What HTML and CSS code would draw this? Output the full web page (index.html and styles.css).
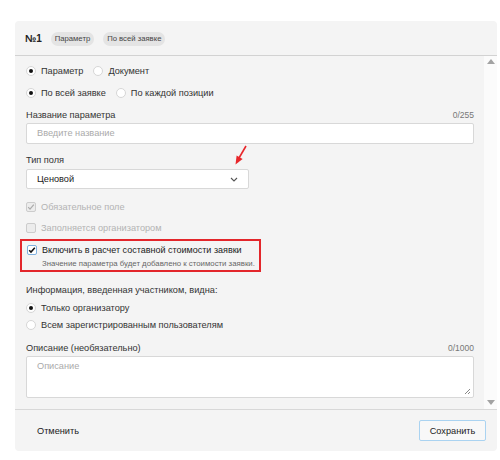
FILE: index.html
```html
<!DOCTYPE html>
<html lang="ru">
<head>
    <meta charset="UTF-8">
    <title>Параметр заявки</title>
    <link rel="stylesheet" href="styles.css">
</head>
<body>
    <div class="panel">
        <div class="head">
            <b class="num">№1</b>
            <span class="tag">Параметр</span>
            <span class="tag">По всей заявке</span>
        </div>

        <div class="body">
            <div class="content">
                <div class="row">
                    <label class="opt"><span class="radio on"></span>Параметр</label>
                    <label class="opt"><span class="radio"></span>Документ</label>
                </div>
                <div class="row r2">
                    <label class="opt"><span class="radio on"></span>По всей заявке</label>
                    <label class="opt"><span class="radio"></span>По каждой позиции</label>
                </div>

                <div class="label l1"><span>Название параметра</span><span class="count">0/255</span></div>
                <div class="input placeholder">Введите название</div>

                <div class="label l2"><span>Тип поля</span></div>
                <div class="select">
                    <span>Ценовой</span>
                    <svg width="8" height="5" viewBox="0 0 8 5"><path d="M1 1l3 3 3-3" fill="none" stroke="#555" stroke-width="1.1"/></svg>
                </div>

                <div class="check disabled c1">
                    <span class="box"><svg width="8" height="8" viewBox="0 0 8 8"><path d="M1.2 4.2l1.8 1.9 3.8-4.4" fill="none" stroke="#aaa" stroke-width="1.2"/></svg></span>
                    Обязательное поле
                </div>
                <div class="check disabled c2">
                    <span class="box"></span>
                    Заполняется организатором
                </div>

                <div class="marked">
                    <div class="check">
                        <span class="box blue"><svg width="8" height="8" viewBox="0 0 8 8"><path d="M1.2 4.2l1.8 1.9 3.8-4.4" fill="none" stroke="#111" stroke-width="1.5"/></svg></span>
                        Включить в расчет составной стоимости заявки
                    </div>
                    <div class="hint">Значение параметра будет добавлено к стоимости заявки.</div>
                </div>

                <div class="label l3"><span>Информация, введенная участником, видна:</span></div>
                <label class="opt line v1"><span class="radio on"></span>Только организатору</label>
                <label class="opt line v2"><span class="radio"></span>Всем зарегистрированным пользователям</label>

                <div class="label l4"><span>Описание (необязательно)</span><span class="count">0/1000</span></div>
                <div class="textarea placeholder">
                    Описание
                    <svg class="grip" width="7" height="7" viewBox="0 0 7 7"><path d="M6 1L1 6M6 4L4 6" stroke="#888" stroke-width="1"/></svg>
                </div>
            </div>
            <div class="scrollbar">
                <span class="arrow up"></span>
                <span class="arrow down"></span>
            </div>
        </div>

        <div class="foot">
            <button class="btn link">Отменить</button>
            <button class="btn save">Сохранить</button>
        </div>

        <!-- pointer to the field type select -->
        <svg class="pointer" width="16" height="22" viewBox="0 0 16 22">
            <path d="M13 1L6 13" stroke="#e8262a" stroke-width="1.6" fill="none"/>
            <path d="M2.5 19.5L3.6 10.6 9.6 14z" fill="#e8262a"/>
        </svg>
    </div>
</body>
</html>
```

FILE: styles.css
```css
body {
    margin: 0;
    background: #fff;
    font-family: "Liberation Sans", Arial, sans-serif;
    font-size: 9.2px;
    color: #333;
}
.panel {
    position: relative;
    margin: 21px 0 0 15px;
    width: 482px;
    height: 430px;
    background: #f4f4f4;
    border-radius: 4px;
    display: flex;
    flex-direction: column;
}
.head {
    height: 35px;
    box-sizing: border-box;
    border-bottom: 1px solid #d2d2d2;
    display: flex;
    align-items: center;
    gap: 9px;
    padding: 1px 0 0 10px;
}
.num {
    font-size: 10px;
    color: #222;
}
.tag {
    background: #e4e4e4;
    border-radius: 7px;
    height: 14px;
    line-height: 14px;
    padding: 0 4px;
    font-size: 7.7px;
    color: #444;
}
.body {
    flex: 1;
    display: flex;
    min-height: 0;
}
.content {
    flex: 1;
    padding: 8px 10px 0 11px;
}
.scrollbar {
    width: 13px;
    background: #fbfbfb;
    display: flex;
    flex-direction: column;
    justify-content: space-between;
    align-items: center;
    padding: 3px 0 4px;
}
.arrow {
    width: 0;
    height: 0;
    border-left: 4px solid transparent;
    border-right: 4px solid transparent;
}
.arrow.up {
    border-bottom: 5px solid #a3a3a3;
}
.arrow.down {
    border-top: 5px solid #a3a3a3;
}
.row {
    display: flex;
    gap: 10px;
    height: 14px;
    align-items: center;
}
.r2 {
    margin-top: 8px;
}
.opt {
    display: flex;
    align-items: center;
    gap: 5px;
    color: #333;
}
.line {
    height: 14px;
}
.v1 {
    margin-top: 4px;
}
.v2 {
    margin-top: 3px;
}
.radio {
    position: relative;
    width: 10px;
    height: 10px;
    box-sizing: border-box;
    border: 1px solid #d6d6d6;
    border-radius: 50%;
    background: #fff;
}
.radio.on::after {
    content: "";
    position: absolute;
    left: 2px;
    top: 2px;
    width: 4px;
    height: 4px;
    border-radius: 50%;
    background: #111;
}
.label {
    display: flex;
    justify-content: space-between;
    height: 14px;
    line-height: 14px;
    color: #333;
}
.count {
    font-size: 8.5px;
    color: #777;
}
.l1 {
    margin-top: 8px;
}
.l2 {
    margin-top: 9px;
}
.l3 {
    margin-top: 11px;
}
.l4 {
    margin-top: 9px;
}
.input,
.select,
.textarea {
    box-sizing: border-box;
    background: #fff;
    border: 1px solid #d8d8d8;
    border-radius: 2px;
    padding: 0 10px;
}
.input {
    margin-top: 1px;
    height: 21px;
    line-height: 19px;
}
.placeholder {
    color: #aaa;
}
.select {
    margin-top: 2px;
    width: 223px;
    height: 20px;
    display: flex;
    align-items: center;
    justify-content: space-between;
    color: #222;
    padding-right: 10px;
}
.check {
    display: flex;
    align-items: center;
    gap: 5px;
    height: 14px;
    white-space: nowrap;
}
.check .box {
    width: 10px;
    height: 10px;
    box-sizing: border-box;
    border: 1px solid #ccc;
    border-radius: 2px;
    background: #fff;
    display: flex;
    align-items: center;
    justify-content: center;
}
.check .box.blue {
    border-color: #7fb0de;
}
.disabled {
    color: #b3b3b3;
}
.disabled .box {
    background: #ececec;
}
.c1 {
    margin-top: 11px;
}
.c2 {
    margin-top: 7px;
}
.marked {
    margin: 4px 0 0 -6px;
    width: 241px;
    height: 33px;
    box-sizing: border-box;
    border: 2px solid #e3262b;
    padding: 2px 0 0 5px;
}
.marked .check {
    color: #222;
    font-size: 9px;
}
.hint {
    margin: 1px 0 0 15px;
    font-size: 7.8px;
    line-height: 11px;
    white-space: nowrap;
    color: #666;
}
.textarea {
    position: relative;
    margin-top: 1px;
    height: 42px;
    padding-top: 4px;
}
.grip {
    position: absolute;
    right: 2px;
    bottom: 2px;
}
.foot {
    height: 42px;
    box-sizing: border-box;
    border-top: 1px solid #d8d8d8;
    display: flex;
    align-items: center;
    justify-content: space-between;
    padding: 0 11px 0 12px;
}
.btn {
    font-family: inherit;
    font-size: 9.2px;
    color: #222;
    cursor: pointer;
}
.btn.link {
    border: none;
    background: none;
    padding: 0 10px;
}
.btn.save {
    width: 67px;
    height: 21px;
    background: #f8f8f8;
    border: 1px solid #aad3f1;
    border-radius: 2px;
}
.pointer {
    position: absolute;
    left: 218px;
    top: 124px;
}
```
